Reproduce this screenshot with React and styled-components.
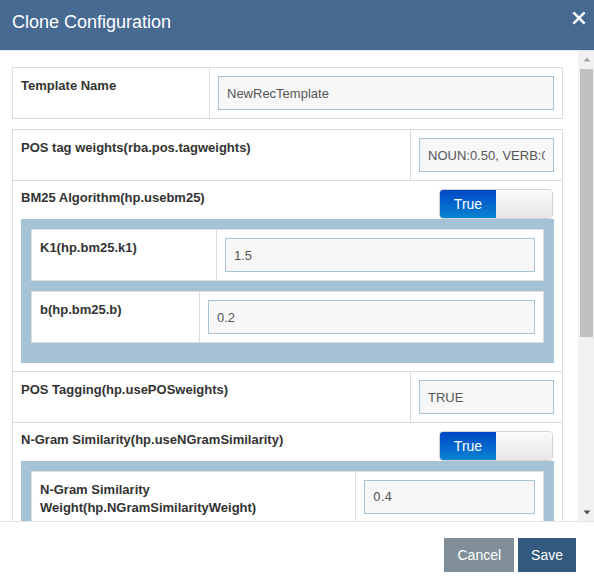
import React from 'react';
import styled, { createGlobalStyle } from 'styled-components';

const GlobalStyle = createGlobalStyle`
  html, body {
    margin: 0;
    padding: 0;
    background: #fff;
  }
  body {
    font-family: "Liberation Sans", Arial, sans-serif;
    font-size: 13px;
    color: #333;
  }
  * {
    box-sizing: border-box;
  }
`;

const Modal = styled.div`
  display: flex;
  flex-direction: column;
  width: 594px;
  height: 578px;
  background: #fff;
  overflow: hidden;
`;

const Header = styled.div`
  flex: 0 0 auto;
  height: 51px;
  display: flex;
  align-items: flex-start;
  justify-content: space-between;
  background: #466a92;
  border-bottom: 1px solid #e5e5e5;
  padding: 11px 8px 0 12px;
`;

const Title = styled.h4`
  margin: 0;
  font-size: 18px;
  font-weight: normal;
  line-height: 22px;
  color: #fff;
`;

const Close = styled.button`
  border: 0;
  background: none;
  padding: 0;
  margin: 0;
  width: 14px;
  height: 14px;
  display: flex;
  cursor: pointer;
`;

const Body = styled.div`
  flex: 1 1 auto;
  display: flex;
  min-height: 0;
`;

const Scroller = styled.div`
  flex: 1 1 auto;
  overflow: hidden;
  padding: 16px 15px 0 12px;
`;

const Rail = styled.div`
  flex: 0 0 16px;
  display: flex;
  flex-direction: column;
  background: #f1f1f1;
  padding: 0 1px 0 2px;
`;

const RailButton = styled.div`
  flex: 0 0 17px;
  display: flex;
  align-items: center;
  justify-content: center;
`;

const RailTrack = styled.div`
  flex: 1 1 auto;
  padding-top: 1px;
`;

const Thumb = styled.div`
  height: 268px;
  background: #c1c1c1;
`;

const Box = styled.div`
  border: 1px solid #ddd;
  background: #fff;
  & + & {
    margin-top: 10px;
  }
`;

const InnerBox = styled(Box)`
  & + & {
    margin-top: 10px;
  }
`;

const Row = styled.div`
  display: grid;
  grid-template-columns: ${p => p.$label}px 1fr;
  & + & {
    border-top: 1px solid #ddd;
  }
`;

const SwitchRow = styled.div`
  padding: 8px;
  & + & {
    border-top: 1px solid #ddd;
  }
  ${Row} + & {
    border-top: 1px solid #ddd;
  }
  & + ${Row} {
    border-top: 1px solid #ddd;
  }
`;

const SwitchHead = styled.div`
  display: flex;
  justify-content: space-between;
  align-items: flex-start;
  height: 30px;
`;

const Label = styled.div`
  font-weight: bold;
  font-size: 13px;
  line-height: 18px;
  color: #333;
  padding: ${p => (p.$flush ? '0' : '9px 8px')};
`;

const Cell = styled.div`
  border-left: 1px solid #ddd;
  padding: 8px;
`;

const Input = styled.input`
  display: block;
  width: 100%;
  height: 34px;
  padding: 0 8px;
  border: 1px solid #a5c3d4;
  background: #f7f7f7;
  color: #555;
  font-family: ${p => (p.$numeric ? '"DejaVu Sans", Verdana, sans-serif' : '"Liberation Sans", Arial, sans-serif')};
  font-size: ${p => (p.$numeric ? '12px' : '13px')};
  outline: none;
`;

const Toggle = styled.div`
  display: flex;
  width: 114px;
  height: 30px;
  margin-right: 1px;
  border-radius: 4px;
  overflow: hidden;
  border: 1px solid #d4d4d4;
`;

const ToggleOn = styled.div`
  flex: 0 0 56px;
  display: flex;
  align-items: center;
  justify-content: center;
  color: #fff;
  font-size: 14px;
  background: linear-gradient(#0047c6, #0a84d2);
`;

const ToggleOff = styled.div`
  flex: 1 1 auto;
  background: linear-gradient(#fbfbfb, #e6e6e6);
`;

const Panel = styled.div`
  background: #a5c3d4;
  padding: 10px 10px 20px;
`;

const Footer = styled.div`
  flex: 0 0 57px;
  display: flex;
  justify-content: flex-end;
  align-items: flex-start;
  gap: 4px;
  border-top: 1px solid #e5e5e5;
  padding: 16px 18px 0 0;
`;

const Button = styled.button`
  height: 34px;
  padding: 0 13px;
  border: 0;
  border-radius: 0;
  font-family: "Liberation Sans", Arial, sans-serif;
  font-size: 14px;
  color: #fff;
  background: ${p => (p.$primary ? '#33597f' : '#808f99')};
  cursor: pointer;
`;

const FieldRow = ({ label, width, value, numeric }) => (
  <Row $label={width}>
    <Label>{label}</Label>
    <Cell>
      <Input defaultValue={value} $numeric={numeric} />
    </Cell>
  </Row>
);

const Switch = ({ label, children }) => (
  <SwitchRow>
    <SwitchHead>
      <Label $flush>{label}</Label>
      <Toggle>
        <ToggleOn>True</ToggleOn>
        <ToggleOff />
      </Toggle>
    </SwitchHead>
    <Panel>{children}</Panel>
  </SwitchRow>
);

const CloseIcon = () => (
  <svg width="14" height="14" viewBox="0 0 14 14">
    <path
      d="M2.2 0.5 L7 5.3 L11.8 0.5 L13.5 2.2 L8.7 7 L13.5 11.8 L11.8 13.5 L7 8.7 L2.2 13.5 L0.5 11.8 L5.3 7 L0.5 2.2 Z"
      fill="#fff"
    />
  </svg>
);

const Arrow = ({ up, color }) => (
  <svg width="8" height="5" viewBox="0 0 8 5">
    <polygon points={up ? '4,0.5 7.5,4.5 0.5,4.5' : '0.5,0.5 7.5,0.5 4,4.5'} fill={color} />
  </svg>
);

export default function App() {
  return (
    <>
      <GlobalStyle />
      <Modal>
        <Header>
          <Title>Clone Configuration</Title>
          <Close aria-label="Close">
            <CloseIcon />
          </Close>
        </Header>
        <Body>
          <Scroller>
            <Box>
              <FieldRow label="Template Name" width={196} value="NewRecTemplate" />
            </Box>
            <Box>
              <FieldRow
                label="POS tag weights(rba.pos.tagweights)"
                width={397}
                value="NOUN:0.50, VERB:0.30, ADJ:0.20"
              />
              <Switch label="BM25 Algorithm(hp.usebm25)">
                <InnerBox>
                  <FieldRow label="K1(hp.bm25.k1)" width={184} value="1.5" />
                </InnerBox>
                <InnerBox>
                  <FieldRow label="b(hp.bm25.b)" width={167} value="0.2" />
                </InnerBox>
              </Switch>
              <FieldRow label="POS Tagging(hp.usePOSweights)" width={397} value="TRUE" />
              <Switch label="N-Gram Similarity(hp.useNGramSimilarity)">
                <InnerBox>
                  <FieldRow
                    label="N-Gram Similarity Weight(hp.NGramSimilarityWeight)"
                    width={323}
                    value="0.4"
                    numeric
                  />
                </InnerBox>
              </Switch>
            </Box>
          </Scroller>
          <Rail>
            <RailButton>
              <Arrow up color="#a3a3a3" />
            </RailButton>
            <RailTrack>
              <Thumb />
            </RailTrack>
            <RailButton>
              <Arrow color="#505050" />
            </RailButton>
          </Rail>
        </Body>
        <Footer>
          <Button>Cancel</Button>
          <Button $primary>Save</Button>
        </Footer>
      </Modal>
    </>
  );
}
